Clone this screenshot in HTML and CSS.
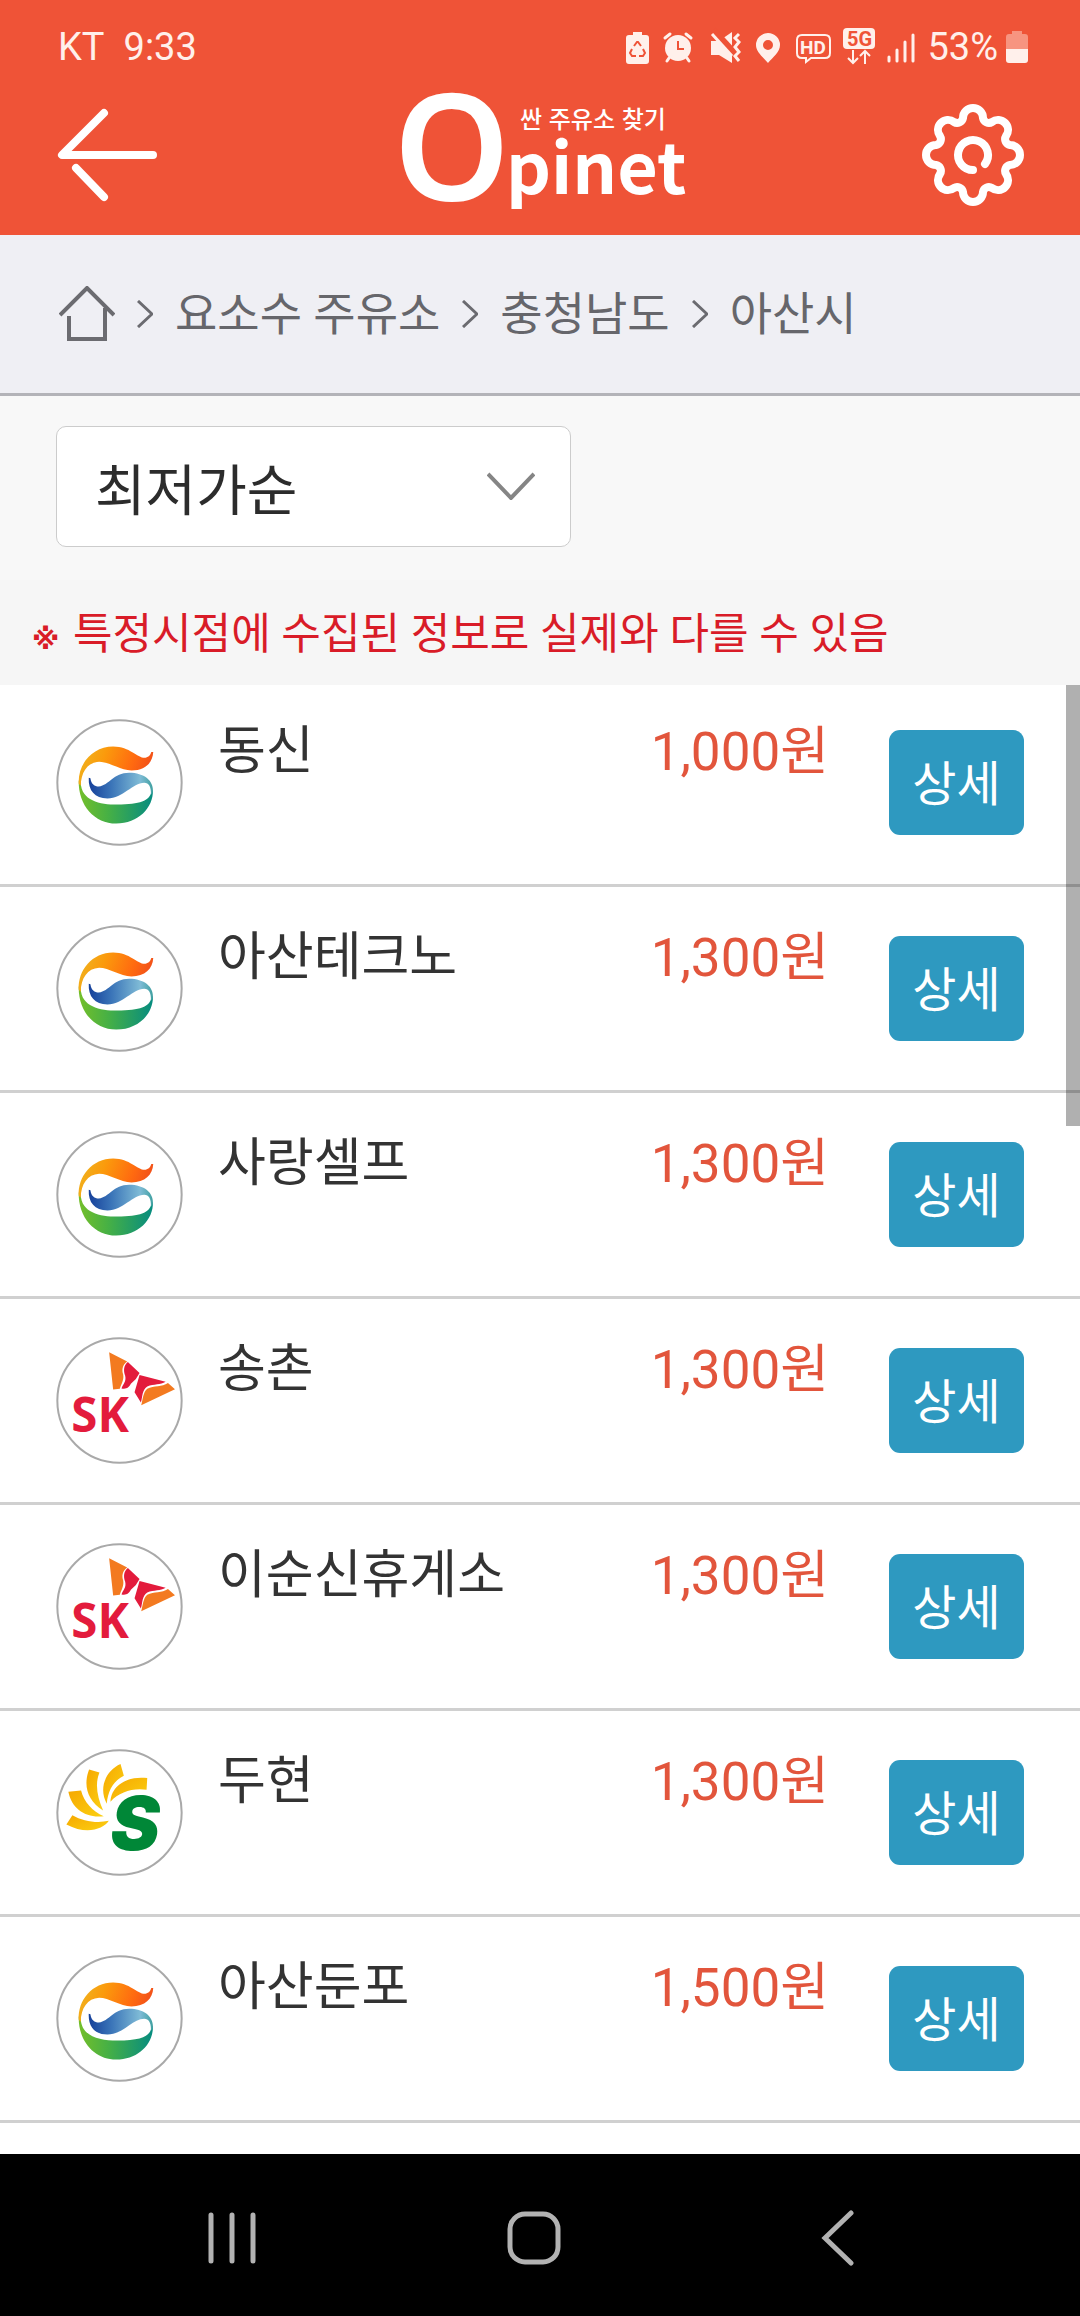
FILE: index.html
```
<!DOCTYPE html>
<html lang="ko">
<head>
  <meta charset="UTF-8">
  <title>Opinet - 요소수 주유소</title>
  <meta name="viewport" content="width=device-width, initial-scale=1.0">
  <link rel="stylesheet" href="styles.css">
</head>
<body>
  <!-- shared brand marks -->
  <svg class="defs" width="0" height="0" aria-hidden="true">
    <defs>
      <linearGradient id="gsOrange" x1="0" x2="1" y1="0.4" y2="0.6">
        <stop offset="0" stop-color="#f0b21e"/>
        <stop offset="0.3" stop-color="#fb9a0c"/>
        <stop offset="0.7" stop-color="#ff6a10"/>
        <stop offset="1" stop-color="#ee4a1c"/>
      </linearGradient>
      <linearGradient id="gsBlue" x1="0" x2="1">
        <stop offset="0" stop-color="#16409a"/>
        <stop offset="0.35" stop-color="#3a74b8"/>
        <stop offset="0.8" stop-color="#7fbbd6"/>
        <stop offset="1" stop-color="#3fa0a0"/>
      </linearGradient>
      <linearGradient id="gsGreen" x1="0" x2="1">
        <stop offset="0" stop-color="#74bf2a"/>
        <stop offset="0.4" stop-color="#46b045"/>
        <stop offset="1" stop-color="#068c80"/>
      </linearGradient>
      <linearGradient id="petal" x1="0" x2="1" y1="0" y2="1">
        <stop offset="0" stop-color="#f6a800"/>
        <stop offset="1" stop-color="#fbd012"/>
      </linearGradient>
      <g id="gs">
        <circle cx="239" cy="246" r="186" fill="#fff" stroke="#a9a9a9" stroke-width="6"/>
        <path fill="url(#gsGreen)" d="M117 240C115 315 165 369 229 369C295 369 341 322 339 268L334 276C328 300 302 312 232 312C180 312 124 300 123 245Z"/>
        <path fill="url(#gsOrange)" d="M117 250C114 190 158 138 220 138C272 138 292 174 317 172C328 170 332 162 334 155H340C338 188 315 210 275 210C240 209 208 184 178 184C143 186 124 215 123 256Z"/>
        <path fill="url(#gsBlue)" d="M147 232L152 233C154 250 165 258 177 258C208 255 220 217 268 217C312 217 342 240 339 275L333 282C334 260 327 247 313 247C278 247 250 294 203 294C165 294 145 270 147 232Z"/>
      </g>
      <g id="sk">
        <circle cx="239" cy="240" r="186" fill="#fff" stroke="#a9a9a9" stroke-width="6"/>
        <path fill="#f37a20" d="M208 96L262 123C246 134 246 150 250 162C253 180 244 190 240 205L220 207Z"/>
        <path fill="#e31b3c" d="M264 125L299 158L288 176L273 190C266 203 260 206 245 204C250 190 260 184 256 166C250 150 252 134 264 125Z"/>
        <path fill="#e31b3c" d="M299 164L377 184C362 194 342 190 322 198C306 208 308 230 303 246L284 215Z"/>
        <path fill="#f37a20" d="M384 188L405 206L304 254C309 238 309 216 322 205C342 196 366 200 384 188Z"/>
      </g>
      <g id="soil">
        <circle cx="239" cy="246" r="186" fill="#fff" stroke="#a9a9a9" stroke-width="6"/>
        <g fill="url(#petal)">
          <path d="M80 282L98 254C130 272 170 279 207 271C190 296 140 314 80 282Z"/>
          <path d="M86 184L124 180C133 215 158 242 192 257C140 264 96 236 86 184Z"/>
          <path d="M148 117L179 126C165 160 172 200 190 240C142 210 130 165 148 117Z"/>
          <path d="M242 101L252 136C222 150 204 180 201 220C176 175 196 122 242 101Z"/>
          <path d="M322 143L320 178C280 172 238 184 212 214C214 165 265 135 322 143Z"/>
        </g>
      </g>
    </defs>
  </svg>

  <header>
    <div class="status">
      <span>KT</span>
      <span class="clock">9:33</span>
      <div class="status-icons">
        <svg width="23" height="40" viewBox="0 0 23 40"><path fill="#fff0eb" d="M7 5h9v3h4q3 0 3 3v23q0 3-3 3H3q-3 0-3-3V11q0-3 3-3h4z"/><path fill="none" stroke="#ef5337" stroke-width="2" d="M8 19l3-4h1l3 4M17 22l2 4-2 3h-4M10 29H6l-2-3 2-4"/></svg>
        <svg width="34" height="40" viewBox="-3 0 34 40"><g fill="none" stroke="#fff0eb" stroke-width="3" stroke-linecap="round"><path d="M1 11l5-4M27 11l-5-4M5 31l-2 3M23 31l2 3"/></g><circle cx="14" cy="21" r="13" fill="#fff0eb"/><path fill="none" stroke="#ef5337" stroke-width="2" d="M14 14v8h6"/></svg>
        <svg width="34" height="40" viewBox="-3 0 34 40"><path fill="#fff0eb" d="M1 14h8l13-9v31L9 28H1z"/><path stroke="#ef5337" stroke-width="7" d="M3 3l24 26"/><g fill="none" stroke="#fff0eb" stroke-width="3"><path d="M2 7l20 22"/><path d="M29 7l-4 4 4 4-4 5 4 5-4 4 4 5"/></g></svg>
        <svg width="28" height="40" viewBox="-3 0 28 40"><path fill="#fff0eb" fill-rule="evenodd" d="M12 6a12 12 0 0 1 12 12c0 7-7 12-12 18C7 30 0 25 0 18A12 12 0 0 1 12 6zm0 7a5 5 0 1 0 0 10a5 5 0 1 0 0-10z"/></svg>
        <svg width="38" height="40" viewBox="-3 0 38 40"><path fill="none" stroke="#fff0eb" stroke-width="2" d="M6 8h23q5 0 5 5v13q0 5-5 5H15l-5 4v-4H6q-5 0-5-5V13q0-5 5-5z"/><text x="4" y="27" class="icon-hd">HD</text></svg>
        <svg width="32" height="40" viewBox="0 0 32 40"><rect y="1" width="32" height="21" rx="4" fill="#fff0eb"/><text x="4" y="19" class="icon-5g">5G</text><path fill="none" stroke="#fff0eb" stroke-width="2" d="M10 23v13M5 31l5 5 5-5M22 37V24M17 29l5-5 5 5"/></svg>
        <svg width="28" height="40" viewBox="0 0 28 40"><path stroke="#fff0eb" stroke-width="3" stroke-linecap="round" d="M2 30v4M10 23v11M18 15v19M26 8v26"/></svg>
        <span class="battery">53%
          <svg width="22" height="40" viewBox="0 0 22 40"><path fill="#f79480" d="M6 5h10v3h3q3 0 3 3v12H0V11q0-3 3-3h3z"/><path fill="#fff0eb" d="M0 23h22v11q0 3-3 3H3q-3 0-3-3z"/></svg>
        </span>
      </div>
    </div>
    <div class="topbar">
      <button type="button" class="icon-btn" aria-label="뒤로">
        <svg width="102" height="102" viewBox="0 0 102 102"><path fill="none" stroke="#fff" stroke-width="8" stroke-linecap="round" stroke-linejoin="round" d="M48 9L6 51H97M20 64L48 93"/></svg>
      </button>
      <h1 class="logo">
        <span class="logo-o">O</span>
        <span class="logo-rest">
          <small>싼 주유소 찾기</small>
          <span class="logo-name">pinet</span>
        </span>
      </h1>
      <button type="button" class="icon-btn" aria-label="설정">
        <svg width="102" height="102" viewBox="-51 -51 102 102"><g fill="none" stroke="#fff" stroke-width="8" stroke-linecap="round"><path d="M-10-37A10 10 0 0 1 10-37A6 6 0 0 0 19-33A10 10 0 0 1 33-19A6 6 0 0 0 37-10A10 10 0 0 1 37 10A6 6 0 0 0 33 19A10 10 0 0 1 19 33A6 6 0 0 0 10 37A10 10 0 0 1-10 37A6 6 0 0 0-19 33A10 10 0 0 1-33 19A6 6 0 0 0-37 10A10 10 0 0 1-37-10A6 6 0 0 0-33-19A10 10 0 0 1-19-33A6 6 0 0 0-10-37Z"/><path d="M0 15A15 15 0 1 1 12 9"/></g></svg>
      </button>
    </div>
  </header>

  <nav class="crumbs">
    <a href="#" aria-label="홈"><svg width="56" height="56" viewBox="0 0 56 56"><path fill="none" stroke="#6b6b70" stroke-width="4" d="M1 29L28 2L55 29M10 30V53H46V22"/></svg></a>
    <svg class="sep" width="16" height="28" viewBox="0 0 16 28"><path d="M1 1L15 14L1 27"/></svg>
    <a href="#">요소수 주유소</a>
    <svg class="sep" width="16" height="28" viewBox="0 0 16 28"><path d="M1 1L15 14L1 27"/></svg>
    <a href="#">충청남도</a>
    <svg class="sep" width="16" height="28" viewBox="0 0 16 28"><path d="M1 1L15 14L1 27"/></svg>
    <a href="#">아산시</a>
  </nav>

  <div class="filter">
    <div class="select-box">
      <select id="sort" aria-label="정렬">
        <option>최저가순</option>
      </select>
      <svg width="48" height="28" viewBox="0 0 48 28"><path fill="none" stroke="#858585" stroke-width="4" d="M1 2L24 26L47 2"/></svg>
    </div>
  </div>
  <p class="notice"><span class="mark">※</span> 특정시점에 수집된 정보로 실제와 다를 수 있음</p>

  <main>
    <ul class="stations">
      <li>
        <svg class="brand" viewBox="49 56 380 380"><use href="#gs"/></svg>
        <span class="name">동신</span>
        <span class="price">1,000원</span>
        <button type="button" class="detail">상세</button>
      </li>
      <li>
        <svg class="brand" viewBox="49 56 380 380"><use href="#gs"/></svg>
        <span class="name">아산테크노</span>
        <span class="price">1,300원</span>
        <button type="button" class="detail">상세</button>
      </li>
      <li>
        <svg class="brand" viewBox="49 56 380 380"><use href="#gs"/></svg>
        <span class="name">사랑셀프</span>
        <span class="price">1,300원</span>
        <button type="button" class="detail">상세</button>
      </li>
      <li>
        <svg class="brand" viewBox="49 50 380 380"><use href="#sk"/><text x="95" y="334" class="sk-text">SK</text></svg>
        <span class="name">송촌</span>
        <span class="price">1,300원</span>
        <button type="button" class="detail">상세</button>
      </li>
      <li>
        <svg class="brand" viewBox="49 50 380 380"><use href="#sk"/><text x="95" y="334" class="sk-text">SK</text></svg>
        <span class="name">이순신휴게소</span>
        <span class="price">1,300원</span>
        <button type="button" class="detail">상세</button>
      </li>
      <li>
        <svg class="brand" viewBox="49 56 380 380"><use href="#soil"/><text x="212" y="359" class="soil-text">S</text></svg>
        <span class="name">두현</span>
        <span class="price">1,300원</span>
        <button type="button" class="detail">상세</button>
      </li>
      <li>
        <svg class="brand" viewBox="49 56 380 380"><use href="#gs"/></svg>
        <span class="name">아산둔포</span>
        <span class="price">1,500원</span>
        <button type="button" class="detail">상세</button>
      </li>
    </ul>
    <div class="scrollbar"></div>
  </main>

  <footer>
    <button type="button" aria-label="최근 앱"><svg width="56" height="56" viewBox="0 0 56 56"><path d="M7 5V51M28 5V51M49 5V51"/></svg></button>
    <button type="button" aria-label="홈 화면"><svg width="56" height="56" viewBox="0 0 56 56"><rect x="4" y="4" width="48" height="48" rx="15"/></svg></button>
    <button type="button" aria-label="이전"><svg width="56" height="56" viewBox="0 0 56 56"><path d="M42 3L16 28L42 53"/></svg></button>
  </footer>
</body>
</html>
```

FILE: styles.css
```
* {
  box-sizing: border-box;
}
body {
  margin: 0;
  min-height: 100vh;
  display: flex;
  flex-direction: column;
  background: #fff;
  color: #333;
  font-family: Roboto, 'Noto Sans CJK KR', sans-serif;
}
button {
  border: none;
  padding: 0;
  background: none;
  font-family: inherit;
  cursor: pointer;
}
svg {
  display: block;
  flex-shrink: 0;
}
a {
  color: inherit;
  text-decoration: none;
}
.defs {
  position: absolute;
}
header {
  background: #ef5337;
  color: #fff;
  padding: 27px 56px 0;
}
.status {
  display: flex;
  align-items: center;
  height: 40px;
  padding-left: 2px;
  font-size: 38px;
  line-height: 42px;
  color: #fff0eb;
}
.clock {
  margin-left: 19px;
}
.status-icons {
  display: flex;
  align-items: center;
  gap: 12px;
  margin-left: auto;
  margin-right: -4px;
}
.battery {
  display: flex;
  gap: 8px;
}
.icon-hd {
  font: 700 19px Roboto, sans-serif;
  fill: #fff0eb;
}
.icon-5g {
  font: 700 20px Roboto, sans-serif;
  fill: #ef5337;
}
.topbar {
  display: flex;
  justify-content: space-between;
  align-items: center;
  height: 168px;
  padding-top: 8px;
}
.logo {
  display: flex;
  margin: 0;
  padding-bottom: 22px;
}
.logo-o {
  font-family: 'Noto Sans', sans-serif;
  font-size: 148px;
  line-height: 104px;
  font-weight: 600;
}
.logo-rest {
  display: flex;
  flex-direction: column;
  margin-left: -4px;
  font-family: 'Noto Sans CJK KR', sans-serif;
}
.logo-rest small {
  padding: 10px 0 0 14px;
  font-size: 24px;
  line-height: 32px;
  font-weight: 500;
}
.logo-name {
  font-size: 70px;
  line-height: 60px;
  font-weight: 700;
}
.crumbs {
  display: flex;
  align-items: center;
  gap: 22px;
  height: 161px;
  padding: 0 59px;
  background: #efeff4;
  border-bottom: 3px solid #b3b3b8;
  color: #66666b;
  font-size: 46px;
  line-height: 66px;
}
.sep path {
  fill: none;
  stroke: #6b6b70;
  stroke-width: 3;
}
.filter {
  background: #f8f8f8;
  padding: 30px 56px 33px;
}
.select-box {
  position: relative;
  width: 53%;
  min-width: 515px;
}
.select-box select {
  display: block;
  width: 100%;
  height: 121px;
  padding: 8px 80px 0 38px;
  appearance: none;
  background: #fff;
  border: 1px solid #ccc;
  border-radius: 10px;
  color: #2c2c2c;
  font-family: inherit;
  font-size: 55px;
}
.select-box svg {
  position: absolute;
  right: 36px;
  top: 46px;
  pointer-events: none;
}
.notice {
  margin: 0;
  padding: 24px 32px 21px;
  background: #f6f6f6;
  color: #d91c28;
  font-size: 43px;
  line-height: 60px;
}
.mark {
  margin-right: 3px;
  font-family: 'DejaVu Sans', sans-serif;
  font-size: 28px;
  font-weight: 700;
  line-height: 28px;
}
main {
  position: relative;
  flex: 1;
}
.stations {
  list-style: none;
  margin: 0;
  padding: 0;
}
.stations li {
  display: flex;
  align-items: flex-start;
  padding: 38px 56px;
  border-bottom: 3px solid #d0d0d0;
}
.stations li:first-child {
  padding-top: 34px;
}
.brand {
  width: 127px;
  height: 127px;
}
.sk-text {
  font: 700 142px 'Noto Sans', sans-serif;
  fill: #e31b3c;
}
.soil-text {
  font: italic 900 222px Inter, sans-serif;
  fill: #008737;
}
.name {
  flex: 1;
  margin-left: 35px;
  font-size: 52px;
  line-height: 66px;
}
.price {
  margin-right: 60px;
  font-size: 53px;
  line-height: 66px;
  color: #e2553c;
}
.detail {
  align-self: center;
  width: 135px;
  height: 105px;
  padding-bottom: 6px;
  background: #2e99c0;
  border-radius: 11px;
  color: #fff;
  font-size: 48px;
}
.scrollbar {
  position: absolute;
  right: 0;
  top: 0;
  width: 14px;
  height: 30%;
  background: rgba(0, 0, 0, 0.31);
}
footer {
  display: grid;
  grid-template-columns: repeat(3, 1fr);
  align-items: center;
  justify-items: center;
  height: 162px;
  padding: 6px 92px 0 81px;
  background: #000;
}
footer path,
footer rect {
  fill: none;
  stroke: #b2b2b2;
  stroke-width: 5;
  stroke-linecap: round;
}
```
